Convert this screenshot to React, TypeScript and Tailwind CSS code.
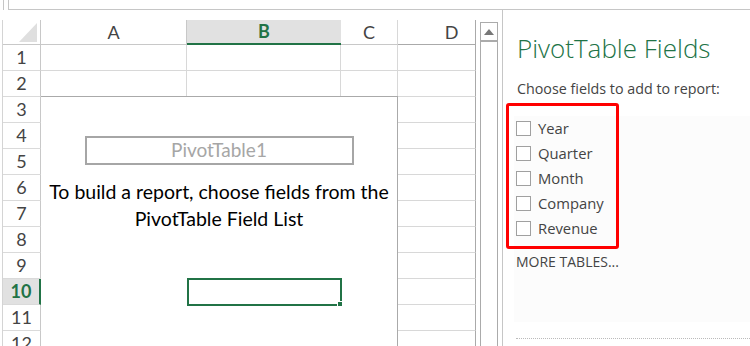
import React from 'react';

const ROWS = [1, 2, 3, 4, 5, 6, 7, 8, 9, 10, 11, 12];
const FIELDS = ['Year', 'Quarter', 'Month', 'Company', 'Revenue'];

const rowStart = [
  'row-start-2', 'row-start-3', 'row-start-4', 'row-start-5', 'row-start-6', 'row-start-7',
  'row-start-8', 'row-start-9', 'row-start-10', 'row-start-11', 'row-start-12', 'row-start-13',
];

const grid = "font-['Lato',sans-serif] text-[#444]";

const App: React.FC = () => {
  return (
    <div className="w-[750px] h-[346px] bg-white overflow-hidden flex flex-col">
      {/* formula bar edge */}
      <div className="h-[10px] flex shrink-0">
        <div className="ml-[3px] w-[6px] h-full border-x border-[#c6c6c6]" />
        <div className="flex-1 h-full border-b border-[#c6c6c6]" />
      </div>

      <div className="flex flex-1 min-h-0">
        {/* sheet */}
        <div className="w-[480px] shrink-0 pl-[2px] pt-[10px]">
          <div className={`grid grid-cols-[38px_146px_154px_57px_78px] grid-rows-[25px_repeat(12,26px)] border-l border-[#d4d4d4] ${grid}`}>
            {/* corner */}
            <div className="col-start-1 row-start-1 flex items-end justify-end pr-[3px] pb-[2px] border-r border-b border-[#c8c8c8]">
              <svg width="18" height="19" viewBox="0 0 18 19"><polygon points="18,0 18,19 0,19" fill="#dfdfdf" /></svg>
            </div>
            {/* column headers */}
            <div className="col-start-2 row-start-1 flex items-center justify-center text-[18px] border-r border-b border-[#c8c8c8]">A</div>
            <div className="col-start-3 row-start-1 flex items-center justify-center text-[18px] font-bold text-[#217346] bg-[#e1e1e1] border-b-2 border-[#217346]">B</div>
            <div className="col-start-4 row-start-1 flex items-center justify-center text-[18px] border-r border-b border-[#d8d8d8] border-b-[#c8c8c8]">C</div>
            <div className="col-start-5 row-start-1 flex items-center justify-center pl-[30px] text-[18px] border-r border-b border-[#d8d8d8] border-b-[#aaaaaa] border-r-[#aaaaaa]">D</div>

            {/* row headers */}
            {ROWS.map((r, i) => (
              <div
                key={r}
                className={`col-start-1 ${rowStart[i]} flex items-center justify-center text-[18px] border-b border-[#dadada] ${
                  r === 10 ? 'bg-[#e1e1e1] text-[#217346] font-bold border-r-2 border-r-[#217346]' : 'border-r border-r-[#c8c8c8]'
                }`}
              >
                {r}
              </div>
            ))}

            {/* rows 1-2 cells */}
            {[0, 1].map(i => (
              <React.Fragment key={i}>
                <div className={`col-start-2 ${rowStart[i]} border-r border-b border-[#d8d8d8]`} />
                <div className={`col-start-3 ${rowStart[i]} border-r border-b border-[#d8d8d8]`} />
                <div className={`col-start-4 ${rowStart[i]} border-r border-b border-[#d8d8d8] ${i === 1 ? 'border-b-[#aaaaaa]' : ''}`} />
              </React.Fragment>
            ))}
            {ROWS.map((r, i) => (
              <div key={r} className={`col-start-5 ${rowStart[i]} border-r border-b border-[#d8d8d8] border-r-[#aaaaaa]`} />
            ))}

            {/* pivot placeholder */}
            <div className="col-start-2 col-end-5 row-start-4 row-end-14 -mt-px border-t border-r border-[#aaaaaa] flex flex-col items-center pt-[39px]">
              <div className="w-[269px] h-[29px] border-2 border-[#a6a6a6] flex items-center justify-center text-[19px] text-[#a6a6a6]">
                PivotTable1
              </div>
              <div className="mt-[13px] text-[19.5px] leading-[27px] text-black text-center">
                <div>To build a report, choose fields from the</div>
                <div>PivotTable Field List</div>
              </div>
            </div>

            {/* active cell B10 */}
            <div className="col-start-3 row-start-11 relative -mt-px h-[28px] w-[155px] border-2 border-[#217346]">
              <div className="absolute -right-[3px] -bottom-[3px] w-[6px] h-[6px] bg-[#217346] border border-white" />
            </div>
          </div>
        </div>

        {/* vertical scrollbar */}
        <div className="w-[18px] shrink-0 pt-[12px] flex flex-col">
          <div className="h-[19px] border border-[#ababab] flex items-center justify-center">
            <svg width="10" height="6" viewBox="0 0 10 6"><polygon points="5,0 10,6 0,6" fill="#777" /></svg>
          </div>
          <div className="flex-1 border-x border-[#ababab] border-t border-t-[#ababab]" />
        </div>

        {/* field list pane */}
        <div className="ml-[4px] flex-1 border-l border-[#c6c6c6] relative font-['Open_Sans',sans-serif] text-[#444]">
          <div className="pl-[14px] pt-[22px]">
            <div className="text-[26px] leading-[32px] font-light text-[#217346]">PivotTable Fields</div>
            <div className="mt-[15px] text-[14.3px] leading-[20px]">Choose fields to add to report:</div>
          </div>
          <div className="ml-[11px] mt-[18px] h-[206px] bg-[#fcfcfc] -translate-y-px">
            {FIELDS.map(f => (
              <div key={f} className="h-[25px] flex items-center pl-[2px]">
                <div className="w-[15px] h-[15px] border border-[#a0a0a0] bg-white" />
                <span className="ml-[7px] text-[14.8px]">{f}</span>
              </div>
            ))}
            <div className="mt-[12px] pl-[2px] text-[14px] leading-[18px]">MORE TABLES...</div>
          </div>
          <div className="ml-[13px] mt-[15px] border-t border-dotted border-[#bbb]" />

          {/* red highlight around the field list */}
          <div className="absolute left-[3px] top-[93px] w-[113px] h-[146px] border-[3px] border-[#ff0000] rounded-[3px]" />
        </div>
      </div>
    </div>
  );
};

export default App;
